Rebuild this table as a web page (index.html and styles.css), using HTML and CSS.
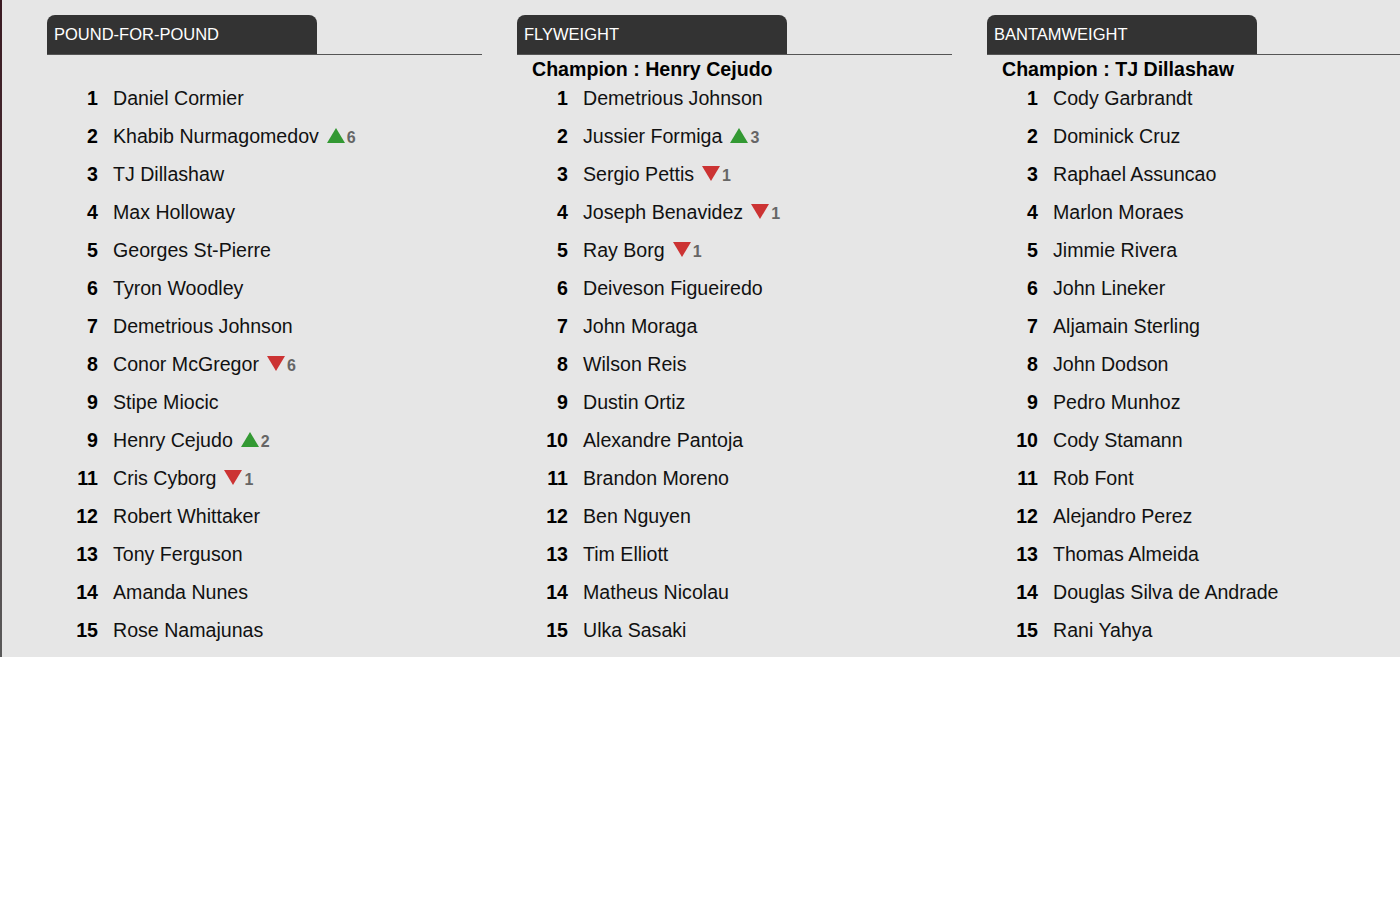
FILE: index.html
```html
<!DOCTYPE html>
<html>
<head>
<meta charset="utf-8">
<link rel="stylesheet" href="styles.css">
</head>
<body>
<div class="board">
  <section class="division">
    <div class="head"><div class="tab">POUND-FOR-POUND</div></div>
    <div class="champ"></div>
    <ol class="ranks">
      <li><span class="num">1</span><span class="name">Daniel Cormier</span></li>
      <li><span class="num">2</span><span class="name">Khabib Nurmagomedov</span><span class="up"></span><span class="delta">6</span></li>
      <li><span class="num">3</span><span class="name">TJ Dillashaw</span></li>
      <li><span class="num">4</span><span class="name">Max Holloway</span></li>
      <li><span class="num">5</span><span class="name">Georges St-Pierre</span></li>
      <li><span class="num">6</span><span class="name">Tyron Woodley</span></li>
      <li><span class="num">7</span><span class="name">Demetrious Johnson</span></li>
      <li><span class="num">8</span><span class="name">Conor McGregor</span><span class="down"></span><span class="delta">6</span></li>
      <li><span class="num">9</span><span class="name">Stipe Miocic</span></li>
      <li><span class="num">9</span><span class="name">Henry Cejudo</span><span class="up"></span><span class="delta">2</span></li>
      <li><span class="num">11</span><span class="name">Cris Cyborg</span><span class="down"></span><span class="delta">1</span></li>
      <li><span class="num">12</span><span class="name">Robert Whittaker</span></li>
      <li><span class="num">13</span><span class="name">Tony Ferguson</span></li>
      <li><span class="num">14</span><span class="name">Amanda Nunes</span></li>
      <li><span class="num">15</span><span class="name">Rose Namajunas</span></li>
    </ol>
  </section>
  <section class="division">
    <div class="head"><div class="tab">FLYWEIGHT</div></div>
    <div class="champ">Champion : Henry Cejudo</div>
    <ol class="ranks">
      <li><span class="num">1</span><span class="name">Demetrious Johnson</span></li>
      <li><span class="num">2</span><span class="name">Jussier Formiga</span><span class="up"></span><span class="delta">3</span></li>
      <li><span class="num">3</span><span class="name">Sergio Pettis</span><span class="down"></span><span class="delta">1</span></li>
      <li><span class="num">4</span><span class="name">Joseph Benavidez</span><span class="down"></span><span class="delta">1</span></li>
      <li><span class="num">5</span><span class="name">Ray Borg</span><span class="down"></span><span class="delta">1</span></li>
      <li><span class="num">6</span><span class="name">Deiveson Figueiredo</span></li>
      <li><span class="num">7</span><span class="name">John Moraga</span></li>
      <li><span class="num">8</span><span class="name">Wilson Reis</span></li>
      <li><span class="num">9</span><span class="name">Dustin Ortiz</span></li>
      <li><span class="num">10</span><span class="name">Alexandre Pantoja</span></li>
      <li><span class="num">11</span><span class="name">Brandon Moreno</span></li>
      <li><span class="num">12</span><span class="name">Ben Nguyen</span></li>
      <li><span class="num">13</span><span class="name">Tim Elliott</span></li>
      <li><span class="num">14</span><span class="name">Matheus Nicolau</span></li>
      <li><span class="num">15</span><span class="name">Ulka Sasaki</span></li>
    </ol>
  </section>
  <section class="division">
    <div class="head"><div class="tab">BANTAMWEIGHT</div></div>
    <div class="champ">Champion : TJ Dillashaw</div>
    <ol class="ranks">
      <li><span class="num">1</span><span class="name">Cody Garbrandt</span></li>
      <li><span class="num">2</span><span class="name">Dominick Cruz</span></li>
      <li><span class="num">3</span><span class="name">Raphael Assuncao</span></li>
      <li><span class="num">4</span><span class="name">Marlon Moraes</span></li>
      <li><span class="num">5</span><span class="name">Jimmie Rivera</span></li>
      <li><span class="num">6</span><span class="name">John Lineker</span></li>
      <li><span class="num">7</span><span class="name">Aljamain Sterling</span></li>
      <li><span class="num">8</span><span class="name">John Dodson</span></li>
      <li><span class="num">9</span><span class="name">Pedro Munhoz</span></li>
      <li><span class="num">10</span><span class="name">Cody Stamann</span></li>
      <li><span class="num">11</span><span class="name">Rob Font</span></li>
      <li><span class="num">12</span><span class="name">Alejandro Perez</span></li>
      <li><span class="num">13</span><span class="name">Thomas Almeida</span></li>
      <li><span class="num">14</span><span class="name">Douglas Silva de Andrade</span></li>
      <li><span class="num">15</span><span class="name">Rani Yahya</span></li>
    </ol>
  </section>
</div>
</body>
</html>
```
FILE: styles.css
```css
html, body {
  margin: 0;
  padding: 0;
  background: #ffffff;
}
body {
  font-family: "Liberation Sans", Arial, sans-serif;
  color: #111;
}
.board {
  display: flex;
  gap: 35px;
  background: #e6e6e6;
  border-left: 2px solid #444;
  border-image: linear-gradient(to bottom, #3a1a22, #4a3036 40%, #5a5a5a) 1;
  padding: 15px 0 8px 45px;
  overflow: hidden;
}
.division {
  flex: 0 0 435px;
  width: 435px;
}
.head {
  border-bottom: 1px solid #555;
  height: 39px;
}
.tab {
  width: 263px;
  height: 39px;
  line-height: 39px;
  padding-left: 7px;
  background: #333333;
  color: #fff;
  font-size: 16.5px;
  border-radius: 8px 8px 0 0;
}
.champ {
  margin-top: 4px;
  height: 20px;
  line-height: 20px;
  font-size: 19.6px;
  font-weight: bold;
  padding-left: 15px;
  color: #000;
}
.ranks {
  list-style: none;
  margin: 0;
  padding: 0;
}
.ranks li {
  display: flex;
  align-items: baseline;
  height: 38px;
  line-height: 38px;
  font-size: 19.6px;
}
.num {
  width: 51px;
  text-align: right;
  font-weight: bold;
  color: #000;
  margin-right: 15px;
}
.name {
  color: #111;
}
.up, .down {
  display: inline-block;
  width: 0;
  height: 0;
  margin-left: 8px;
  border-left: 9px solid transparent;
  border-right: 9px solid transparent;
}
.up {
  border-bottom: 15px solid #339933;
}
.down {
  border-top: 15px solid #cc3333;
}
.delta {
  margin-left: 2px;
  font-size: 16px;
  font-weight: bold;
  color: #666;
}
```
